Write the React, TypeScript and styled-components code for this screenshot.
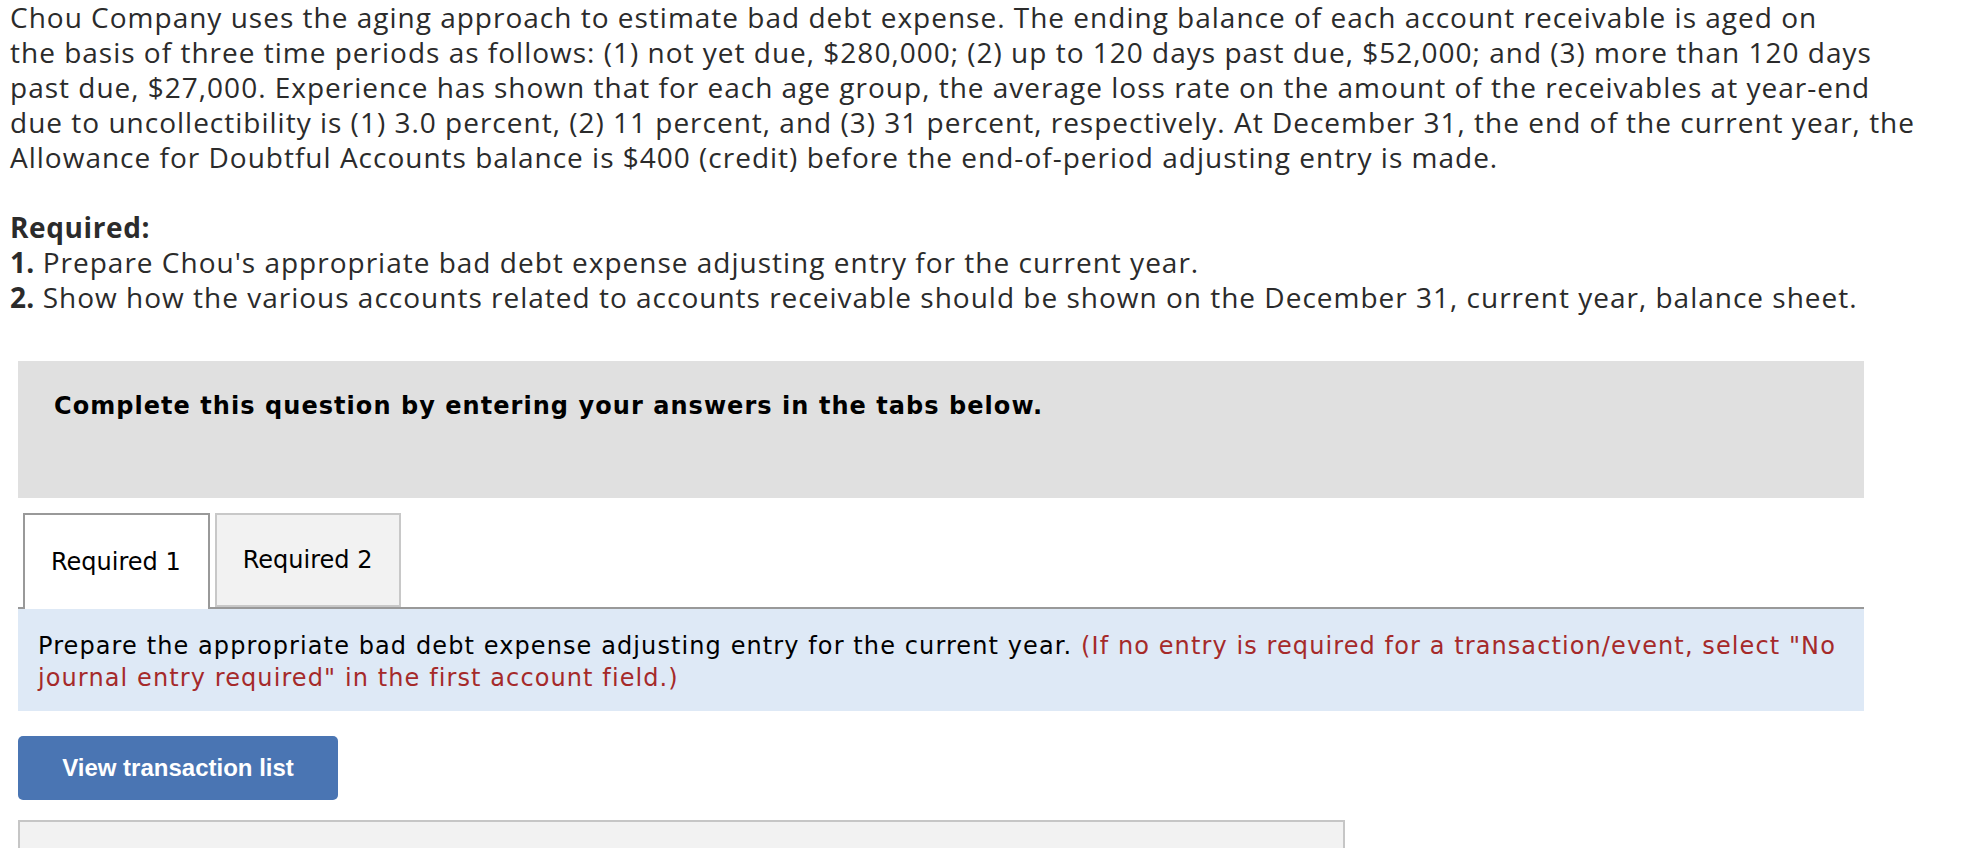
import styled, { createGlobalStyle } from "styled-components";

const GlobalStyle = createGlobalStyle`
  html, body {
    margin: 0;
    padding: 0;
    background: #ffffff;
  }
`;

const Page = styled.div`
  width: 1864px;
  padding: 0 0 0 10px;
  box-sizing: border-box;
`;

const Problem = styled.div`
  font-family: "Open Sans", "Liberation Sans", sans-serif;
  font-size: 28px;
  line-height: 35px;
  letter-spacing: 1px;
  white-space: nowrap;
  color: #2b2b2b;

  p {
    margin: 0;
  }
`;

const RequiredHead = styled.p`
  font-weight: 700;
  letter-spacing: 0.6px;
  margin-top: 35px !important;
`;

const RequiredLine = styled.p`
  b {
    font-weight: 700;
    letter-spacing: 0.2px;
  }
`;

const Prompt = styled.div`
  margin: 46px 0 0 8px;
  height: 137px;
  box-sizing: border-box;
  padding: 29px 36px;
  background: #e0e0e0;
  font-family: "DejaVu Sans", Verdana, sans-serif;
  font-weight: 700;
  font-size: 24px;
  line-height: 32px;
  letter-spacing: 1.05px;
  color: #000;
`;

const TabBar = styled.div`
  margin: 15px 0 0 8px;
  display: flex;
  gap: 5px;
  padding-left: 5px;
  border-bottom: 2px solid #999999;
  height: 94px;
`;

const Tab = styled.div<{ $active?: boolean }>`
  display: flex;
  align-items: center;
  padding: 0 27px 0 26px;
  height: ${(p) => (p.$active ? "96px" : "94px")};
  box-sizing: border-box;
  border: 2px solid ${(p) => (p.$active ? "#999999" : "#c8c8c8")};
  border-bottom: ${(p) => (p.$active ? "none" : "2px solid #c8c8c8")};
  background: ${(p) => (p.$active ? "#ffffff" : "#f2f2f2")};
  font-family: "DejaVu Sans", Verdana, sans-serif;
  font-size: 24px;
  color: #000;
  position: relative;
  z-index: 1;
`;

const Instructions = styled.div`
  margin-left: 8px;
  padding: 21px 20px 17px;
  background: #dee9f6;
  font-family: "DejaVu Sans", Verdana, sans-serif;
  font-size: 24px;
  line-height: 32px;
  letter-spacing: 1.1px;
  color: #000;
`;

const Note = styled.span`
  color: #a52a2a;
`;

const ActionButton = styled.button`
  display: block;
  margin: 25px 0 0 8px;
  width: 320px;
  height: 64px;
  border: none;
  border-radius: 5px;
  background: #4a75b3;
  color: #ffffff;
  font-family: "Liberation Sans", Arial, sans-serif;
  font-weight: 700;
  font-size: 24px;
  cursor: pointer;
`;

const EntryPanel = styled.div`
  margin: 20px 0 0 8px;
  width: 1327px;
  height: 60px;
  box-sizing: border-box;
  border: 2px solid #c6c6c6;
  border-bottom: none;
  background: #f2f2f2;
`;

const App = () => (
  <>
    <GlobalStyle />
    <Page>
      <Problem>
        <p>
          Chou Company uses the aging approach to estimate bad debt expense. The ending balance of
          each account receivable is aged on
          <br />
          the basis of three time periods as follows: (1) not yet due, $280,000; (2) up to 120
          days past due, $52,000; and (3) more than 120 days
          <br />
          past due, $27,000. Experience has shown that for each age group, the average loss rate
          on the amount of the receivables at year-end
          <br />
          due to uncollectibility is (1) 3.0 percent, (2) 11 percent, and (3) 31 percent,
          respectively. At December 31, the end of the current year, the
          <br />
          Allowance for Doubtful Accounts balance is $400 (credit) before the end-of-period
          adjusting entry is made.
        </p>
        <RequiredHead>Required:</RequiredHead>
        <RequiredLine>
          <b>1.</b> Prepare Chou's appropriate bad debt expense adjusting entry for the current
          year.
        </RequiredLine>
        <RequiredLine>
          <b>2.</b> Show how the various accounts related to accounts receivable should be shown
          on the December 31, current year, balance sheet.
        </RequiredLine>
      </Problem>

      <Prompt>Complete this question by entering your answers in the tabs below.</Prompt>

      <TabBar>
        <Tab $active>Required 1</Tab>
        <Tab>Required 2</Tab>
      </TabBar>

      <Instructions>
        Prepare the appropriate bad debt expense adjusting entry for the current year.{" "}
        <Note>
          (If no entry is required for a transaction/event, select "No journal entry required" in
          the first account field.)
        </Note>
      </Instructions>

      <ActionButton type="button">View transaction list</ActionButton>

      <EntryPanel />
    </Page>
  </>
);

export default App;
